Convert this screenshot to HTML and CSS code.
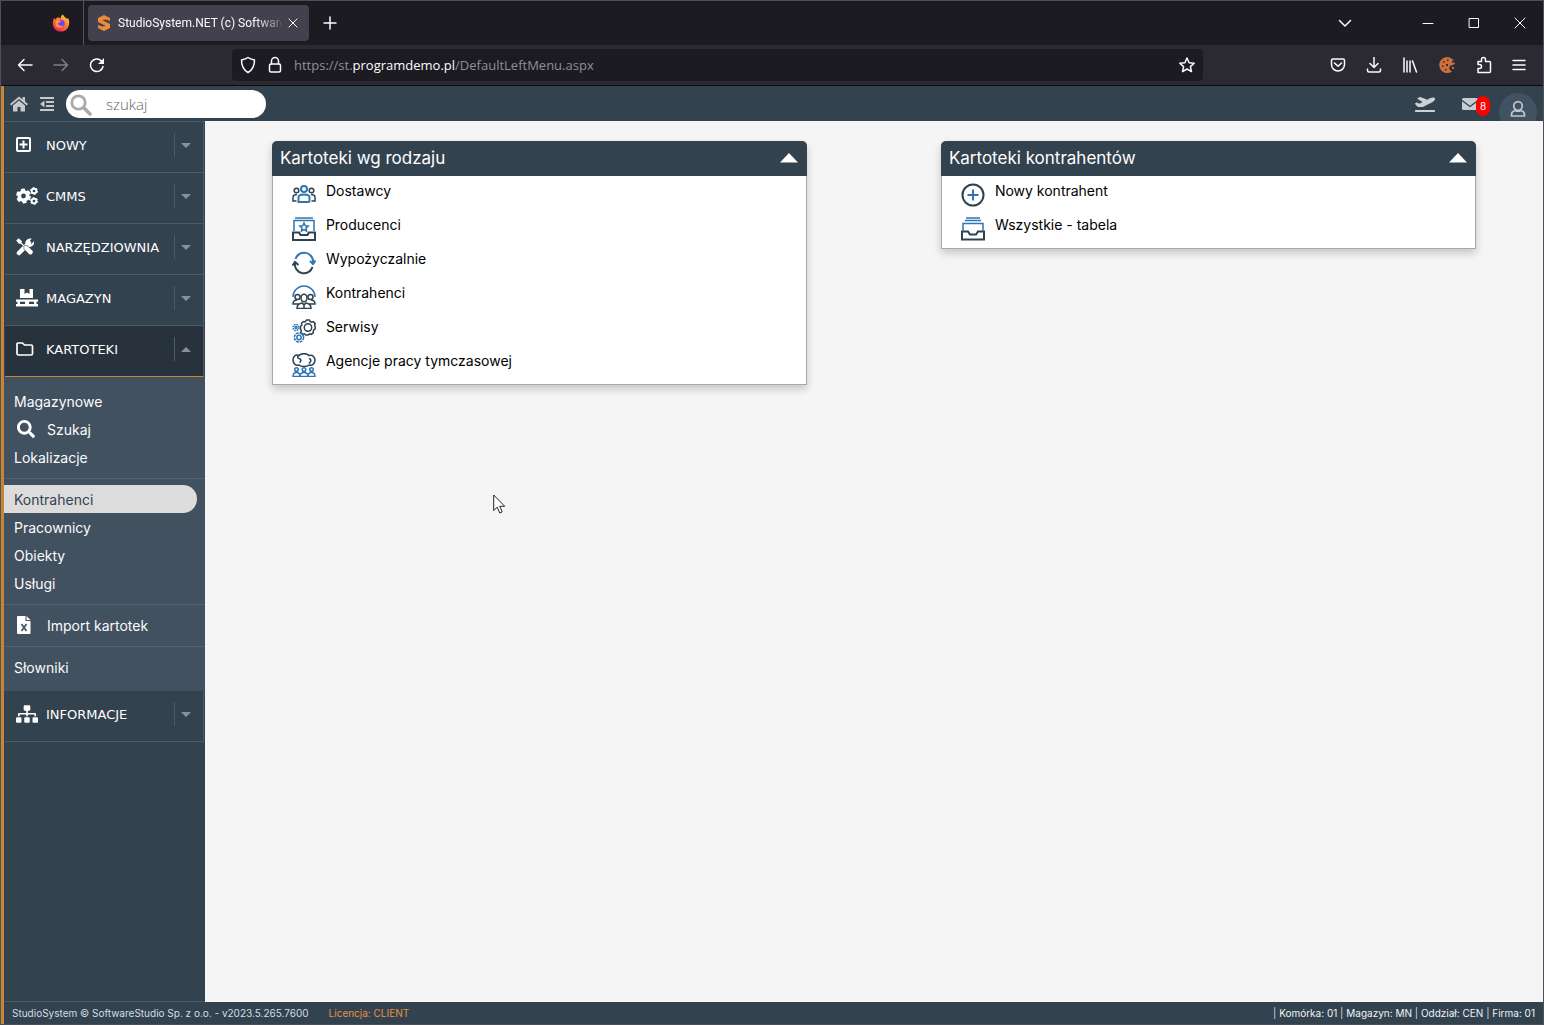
FILE: index.html
```html
<!DOCTYPE html>
<html lang="pl">
<head>
<meta charset="utf-8">
<title>StudioSystem.NET (c) SoftwareStudio</title>
<link rel="stylesheet" href="styles.css">
</head>
<body>
<div class="tabstrip">
  <div class="pinned">
    <svg width="18" height="18" viewBox="0 0 18 18"><defs><linearGradient id="fox" x1="1" y1="0" x2="0.3" y2="1"><stop offset="0" stop-color="#ffe14a"/><stop offset="0.45" stop-color="#ff8a2a"/><stop offset="1" stop-color="#f0245e"/></linearGradient></defs><path d="M2 4l1.500 1.500L5 3.500c2 0 3 .5 4 1C8.500 3 9 1.500 11 .5c1 2.500 3 3 4 4.500l1-1c1.500 3 1.500 5 .8 7.500A8.200 8.200 0 0 1 1 11.500C.5 9 1 6 2 4z" fill="url(#fox)"/><circle cx="9" cy="9.500" r="3.800" fill="#7b3ff2"/><path d="M3.500 7c2-1.500 4-1 5.500.5-1 1-2.500.8-3 2 0 2 3 3 5.500 2-1.500 3-6.500 3-8 0z" fill="#ff9a2a"/></svg>
  </div>
  <div class="tab">
    <svg width="14" height="16" viewBox="0 0 14 16"><path d="M7 0l6 3v3L9 4.500 5 5l8 4v4l-6 3-6-3v-3l4 1.500 4-.5-8-4V3z" fill="#ee8a3c"/></svg>
    <span class="tab-title">StudioSystem.NET (c) SoftwareS</span>
    <button class="bare" aria-label="Zamknij kartę"><svg width="10" height="10" viewBox="0 0 10 10"><path d="M1 1l8 8M9 1L1 9" class="line"/></svg></button>
  </div>
  <button class="bare new-tab" aria-label="Nowa karta"><svg width="14" height="14" viewBox="0 0 14 14"><path d="M7 1v12M1 7h12" class="line bold"/></svg></button>
  <div class="window-controls">
    <button class="bare list-tabs" aria-label="Lista kart"><svg width="14" height="14" viewBox="0 0 14 14"><path d="M1.500 4.500L7 10l5.500-5.500" class="line bold"/></svg></button>
    <button class="bare" aria-label="Minimalizuj"><svg width="12" height="12" viewBox="0 0 12 12"><path d="M1 6.500h10" class="line"/></svg></button>
    <button class="bare" aria-label="Maksymalizuj"><svg width="12" height="12" viewBox="0 0 12 12"><path d="M1.500 1.500h9v9h-9z" class="line"/></svg></button>
    <button class="bare" aria-label="Zamknij"><svg width="12" height="12" viewBox="0 0 12 12"><path d="M1 1l10 10M11 1L1 11" class="line"/></svg></button>
  </div>
</div>

<div class="toolbar">
  <div class="nav-buttons">
    <button class="bare" aria-label="Wstecz"><svg width="16" height="16" viewBox="0 0 16 16"><path d="M7 2.500L1.500 8 7 13.500M1.500 8h13.500" class="line bold"/></svg></button>
    <button class="bare dim" aria-label="Dalej"><svg width="16" height="16" viewBox="0 0 16 16"><path d="M9 2.500L14.500 8 9 13.500M14.500 8H1" class="line bold"/></svg></button>
    <button class="bare" aria-label="Odśwież"><svg width="16" height="16" viewBox="0 0 16 16"><path d="M14 9.500A6.300 6.300 0 1 1 12.500 4" class="line bold"/><path d="M15 1v6H9z" fill="#fbfbfe"/></svg></button>
  </div>
  <div class="url-bar">
    <svg width="16" height="18" viewBox="0 0 16 18"><path d="M8 1.500C6 3 4 3.500 1.500 4c0 6 2 10 6.500 12.500C12.500 14 14.500 10 14.500 4 12 3.500 10 3 8 1.500z" class="line bold"/></svg>
    <svg width="14" height="18" viewBox="0 0 14 18"><rect x="1.500" y="8" width="11" height="8" rx="1.500" class="line bold"/><path d="M3.500 8V5a3.500 3.500 0 0 1 7 0v3" class="line bold"/></svg>
    <span class="url">https://st.<b>programdemo.pl</b>/DefaultLeftMenu.aspx</span>
    <button class="bare" aria-label="Dodaj zakładkę"><svg width="16" height="16" viewBox="0 0 16 16"><path d="M8 1l2.100 4.700 5.100.5-3.800 3.400 1.100 5L8 12l-4.500 2.600 1.100-5L.8 6.200l5.100-.5z" class="line bold"/></svg></button>
  </div>
  <div class="tool-buttons">
    <button class="bare" aria-label="Pocket"><svg width="16" height="16" viewBox="0 0 16 16"><path d="M3 2h10a1.500 1.500 0 0 1 1.500 1.500V7.500a6.500 6.500 0 0 1-13 0V3.500A1.500 1.500 0 0 1 3 2zM4.500 6L8 9.300 11.500 6" class="line bold"/></svg></button>
    <button class="bare" aria-label="Pobrane"><svg width="16" height="16" viewBox="0 0 16 16"><path d="M8 .5V10.500M4 6.500l4 4 4-4M1.500 12v1.500A1.500 1.500 0 0 0 3 15h10a1.500 1.500 0 0 0 1.500-1.500V12" class="line bold"/></svg></button>
    <button class="bare" aria-label="Biblioteka"><svg width="16" height="16" viewBox="0 0 16 16"><path d="M2 1v14M5 4v11M8 4v11M10.500 4l4 11" class="line bold"/></svg></button>
    <button class="bare" aria-label="Cookie"><svg width="18" height="18" viewBox="0 0 18 18"><path d="M12 1.500A8 8 0 1 0 14 15.500l-2-1.500-1-2 1-2 5-2-1-2-2 1V5l2-1-2-1z" fill="#c9713d"/><path d="M5 5h1.500v1.500H5zM9 3.500h1.500V5H9zM4 9.500h1.500V11H4zM8 8h2v2H8zM7 13h1.500v1.500H7z" fill="#4a2415"/><path d="M14 11h2v2h-2z" fill="#c9713d"/></svg></button>
    <button class="bare" aria-label="Rozszerzenia"><svg width="16" height="18" viewBox="0 0 16 18"><path d="M2 5.500h3.500V3.500a2 2 0 0 1 4 0v2h4a1 1 0 0 1 1 1V15.500a1 1 0 0 1-1 1H2v-4h1.500a2 2 0 0 0 0-4H2z" class="line bold"/></svg></button>
    <button class="bare" aria-label="Menu"><svg width="14" height="14" viewBox="0 0 14 14"><path d="M1 2.500h12M1 7h12M1 11.500h12" class="line bold"/></svg></button>
  </div>
</div>

<div class="app">
  <header class="app-bar">
    <a href="#" aria-label="Start"><svg width="18" height="16" viewBox="0 0 18 16"><path d="M9 0.500L0 8l1.200 1.400L9 3l7.800 6.400L18 8l-3-2.500V1h-2.500v2.400zM9 4.500l-6 5V15.500h4.500v-4.500h3v4.500H15V9.500z" fill="#c8c8c8"/></svg></a>
    <button class="bare" aria-label="Zwiń menu"><svg width="14" height="14" viewBox="0 0 14 14"><path d="M0 1h14M6 5h8M6 9h8M0 13h14" stroke="#c8c8c8" stroke-width="2"/><path d="M4.500 3.500v7L0 7z" fill="#c8c8c8"/></svg></button>
    <label class="search">
      <svg width="22" height="22" viewBox="0 0 22 22"><circle cx="8.500" cy="8.500" r="6.700" fill="none" stroke="#aaa" stroke-width="2.800"/><path d="M13.500 13.500l6.500 6.500" stroke="#aaa" stroke-width="3.600" stroke-linecap="round"/></svg>
      <input type="text" placeholder="szukaj" aria-label="szukaj">
    </label>
    <a href="#" class="flights" aria-label="Odloty"><svg width="20" height="16" viewBox="0 0 640 512"><path fill="#cdd0d4" d="M624 448H16c-8.840 0-16 7.160-16 16v32c0 8.840 7.160 16 16 16h608c8.840 0 16-7.160 16-16v-32c0-8.840-7.160-16-16-16zM80.550 341.270c6.280 6.840 15.100 10.720 24.330 10.710l130.540-.18a65.620 65.620 0 0 0 29.640-7.120l290.960-147.650c26.740-13.570 50.710-32.940 67.020-58.310 18.310-28.480 20.300-49.090 13.070-63.650-7.210-14.570-24.740-25.270-58.250-27.450-29.850-1.940-59.540 5.920-86.280 19.480l-98.510 49.990-218.700-82.060a17.799 17.799 0 0 0-18-1.110L90.620 67.290c-10.670 5.410-13.250 19.650-5.170 28.530l156.220 98.100-103.210 52.380-72.350-36.470a17.804 17.804 0 0 0-16.070.02L9.910 230.220c-10.440 5.300-13.190 19.120-5.570 28.080l76.210 82.970z"/></svg></a>
    <a href="#" class="mail" aria-label="Wiadomości"><svg width="16" height="12" viewBox="0 0 16 12"><rect width="16" height="12" rx="1.500" fill="#c9cdd2"/><path d="M0 2.500l8 6 8-6" fill="none" stroke="#33424f" stroke-width="1.300"/></svg><span class="badge">8</span></a>
    <a href="#" class="user" aria-label="Użytkownik"><svg width="16" height="18" viewBox="0 0 16 18"><circle cx="8" cy="6" r="4.300" class="user-line"/><path d="M5 10.500c-2 .5-3.500 2-3.500 4V16h13v-1.500c0-2-1.500-3.500-3.500-4-2 1-4 1-6 0z" class="user-line"/></svg></a>
  </header>

  <nav class="sidebar">
    <a href="#" class="group"><span class="gicon"><svg width="16" height="16" viewBox="0 0 16 16"><rect x="1" y="1" width="13" height="13" rx="1" fill="none" stroke="#fff" stroke-width="2"/><path d="M7.500 3.500v8M3.500 7.500h8" stroke="#fff" stroke-width="2"/></svg></span><span>NOWY</span><i class="arrow"></i></a>
    <a href="#" class="group"><span class="gicon"><svg width="22" height="18" viewBox="0 0 22 18"><g fill="none" stroke="#fff"><circle cx="7.500" cy="9" r="4.200" stroke-width="3.600"/><circle cx="7.500" cy="9" r="6.200" stroke-width="2.400" stroke-dasharray="3.900 2.590"/><circle cx="18" cy="4" r="2.300" stroke-width="1.900"/><circle cx="18" cy="4" r="3.500" stroke-width="1" stroke-dasharray="2 1.660"/><circle cx="18" cy="14" r="2.300" stroke-width="1.900"/><circle cx="18" cy="14" r="3.500" stroke-width="1" stroke-dasharray="2 1.660"/></g></svg></span><span>CMMS</span><i class="arrow"></i></a>
    <a href="#" class="group"><span class="gicon"><svg width="18" height="18" viewBox="0 0 18 18"><path d="M3 15L13 5" stroke="#fff" stroke-width="4.500" stroke-linecap="round"/><path d="M15.800.8l-3 3 .4 2 2 .4 2.700-2.900c.8 3.500-1.700 6.200-5 5.500L9.500 6c-.8-3 2.500-6.500 6.300-5.200z" fill="#fff"/><path d="M0 2.500L2.500 0 6 2.800v2L9 8l1-.5c1 0 1.500.2 2 .7l4.800 4.800c1.500 1.500-1.800 5-3.500 3.500L8.500 11.800c-.8-.8-.9-1.500-.5-2.500L4.800 6h-2z" fill="#fff" stroke="#33424f" stroke-width=".6"/></svg></span><span>NARZĘDZIOWNIA</span><i class="arrow"></i></a>
    <a href="#" class="group"><span class="gicon"><svg width="22" height="18" viewBox="0 0 22 18"><path d="M4 0h4.500v5L11 3.500 13.500 5V0H17v9H4zM0 10.500h22v2.200h-1.500V15H22v2.500H0V15h1.500v-2.300H0zM4 12.700V15h5v-2.300zm9 0V15h5v-2.300z" fill="#fff" fill-rule="evenodd"/></svg></span><span>MAGAZYN</span><i class="arrow"></i></a>
    <a href="#" class="group open"><span class="gicon"><svg width="18" height="14" viewBox="0 0 18 14"><path d="M2 1h4.500l2 2H15a1.500 1.500 0 0 1 1.500 1.500V11.500A1.500 1.500 0 0 1 15 13H2.500A1.500 1.500 0 0 1 1 11.500V2a1 1 0 0 1 1-1z" fill="none" stroke="#fff" stroke-width="1.700"/></svg></span><span>KARTOTEKI</span><i class="arrow up"></i></a>
    <div class="submenu">
      <div class="section">
        <a href="#">Magazynowe</a>
        <a href="#"><span class="sicon"><svg width="18" height="18" viewBox="0 0 512 512"><path fill="#fff" d="M505 442.700L405.300 343c-4.500-4.500-10.600-7-17-7H372c27.600-35.300 44-79.700 44-128C416 93.100 322.900 0 208 0S0 93.100 0 208s93.100 208 208 208c48.300 0 92.700-16.400 128-44v16.300c0 6.400 2.500 12.500 7 17l99.700 99.700c9.400 9.400 24.600 9.400 33.900 0l28.300-28.300c9.400-9.400 9.400-24.600.1-34zM208 336c-70.700 0-128-57.200-128-128 0-70.700 57.200-128 128-128 70.700 0 128 57.200 128 128 0 70.700-57.200 128-128 128z"/></svg></span>Szukaj</a>
        <a href="#">Lokalizacje</a>
      </div>
      <div class="section">
        <a href="#" class="current">Kontrahenci</a>
        <a href="#">Pracownicy</a>
        <a href="#">Obiekty</a>
        <a href="#">Usługi</a>
      </div>
      <div class="section">
        <a href="#"><span class="sicon"><svg width="14" height="18" viewBox="0 0 14 18"><path d="M1 0h7.500v5H13.500v12a1 1 0 0 1-1 1H1a1 1 0 0 1-1-1V1a1 1 0 0 1 1-1zM9.500 0l4 4h-4z" fill="#fff"/><path d="M4.500 8l5 7M9.500 8l-5 7" stroke="#415160" stroke-width="1.700"/></svg></span>Import kartotek</a>
      </div>
      <div class="section">
        <a href="#">Słowniki</a>
      </div>
    </div>
    <a href="#" class="group"><span class="gicon"><svg width="22" height="18" viewBox="0 0 640 512"><path fill="#fff" d="M128 352H32c-17.670 0-32 14.330-32 32v96c0 17.670 14.330 32 32 32h96c17.670 0 32-14.330 32-32v-96c0-17.670-14.330-32-32-32zm-24-80h192v48h48v-48h192v48h48v-57.590c0-21.170-17.230-38.410-38.410-38.410H344v-64h40c17.670 0 32-14.330 32-32V32c0-17.670-14.330-32-32-32H256c-17.670 0-32 14.330-32 32v96c0 17.670 14.330 32 32 32h40v64H94.410C73.230 224 56 241.230 56 262.410V320h48v-48zm264 80h-96c-17.670 0-32 14.330-32 32v96c0 17.670 14.330 32 32 32h96c17.670 0 32-14.330 32-32v-96c0-17.670-14.330-32-32-32zm240 0h-96c-17.670 0-32 14.330-32 32v96c0 17.670 14.330 32 32 32h96c17.670 0 32-14.330 32-32v-96c0-17.670-14.330-32-32-32z"/></svg></span><span>INFORMACJE</span><i class="arrow"></i></a>
  </nav>

  <main class="content">
    <section class="panel">
      <h2>Kartoteki wg rodzaju <button class="bare" aria-label="Zwiń"><svg width="18" height="10" viewBox="0 0 18 10"><path d="M9 0l9 9.500H0z" fill="#fff"/></svg></button></h2>
      <ul>
        <li><a href="#"><svg class="duo" width="24" height="24" viewBox="0 0 24 24"><g class="dark"><circle cx="4.500" cy="7.500" r="2.300"/><circle cx="19.500" cy="7.500" r="2.300"/><path d="M4.500 18H1v-3.500c0-2 1.500-3 4-3M19.500 18H23v-3.500c0-2-1.500-3-4-3"/></g><g class="blue thick"><circle cx="12" cy="6" r="3"/><path d="M6.500 19V14c0-2 2-2.500 5.500-2.500s5.500.5 5.500 2.500v4c0 .6-.4 1-1 1z"/></g></svg>Dostawcy</a></li>
        <li><a href="#"><svg class="duo" width="24" height="24" viewBox="0 0 24 24"><path class="blue" d="M3 1h18M2 14V3.500h20V14M12 6l1.200 2.800 3 .3-2.200 2 .6 3L12 12.500 9.400 14l.6-3-2.200-2 3-.3z"/><path class="dark thick" d="M1 15.500h6l1.500 2.500h7l1.500-2.500h6V23H1z"/></svg>Producenci</a></li>
        <li><a href="#"><svg class="duo" width="24" height="24" viewBox="0 0 24 24"><path class="blue thick" d="M3.500 8A9 9 0 0 1 21 12M18 10l3 3 2.500-3.500"/><path class="dark thick" d="M20.500 16A9 9 0 0 1 3 12M.5 14.500L3 11l3.500 3"/></svg>Wypożyczalnie</a></li>
        <li><a href="#"><svg class="duo" width="24" height="24" viewBox="0 0 24 24"><path class="blue" d="M1 12a11 11 0 0 1 22 0"/><g class="dark"><circle cx="5.500" cy="12" r="2.500"/><circle cx="18.500" cy="12" r="2.500"/><ellipse cx="12" cy="13" rx="3" ry="3.800"/><path d="M7 19H1c0-3 1.500-4 4-4M17 19h6c0-3-1.500-4-4-4M5 23.500c0-3.500 2-5 5-5.500l2 2 2-2c3 .5 5 2 5 5.500zM12 19v4M10.500 19h3"/></g></svg>Kontrahenci</a></li>
        <li><a href="#"><svg class="duo" width="24" height="24" viewBox="0 0 24 24"><g class="dark"><path d="M14.500 1h3l.6 1.600 1.600.7 1.600-.7 2 2-.7 1.700.6 1.500v2l-1.300 1-.7 1.500.1 1.500-2 1.500-1.600-.5-1.600 1.200h-2.400l-1.400-1.200-1.700.4-1.800-1.800.5-1.600L8.500 10V7.500L9.800 6 9.500 4.300l2-1.800 1.600.4z"/><circle cx="16" cy="8.500" r="3.700"/></g><g class="blue"><circle cx="4" cy="8.500" r="3" stroke-dasharray="1.600 .750"/><circle cx="4" cy="8.500" r="1"/><circle cx="7" cy="18.500" r="4.600" stroke-dasharray="2.800 .810"/><circle cx="7" cy="18.500" r="2.200"/></g></svg>Serwisy</a></li>
        <li><a href="#"><svg class="duo" width="24" height="24" viewBox="0 0 24 24"><path class="dark" d="M7 2.500C9 0 15 0 17 2.500c3-1 6 1 6 4.500 0 4-3 6-6 5-2 2-8 2-10 0-3 1-6-1-6-5s3-6 6-4.500zM6.500 5.500c3 0 3 3 1 4M17 5.500c3 1 2 3 0 5M7 2.500c-2 1-1.500 2-.5 3"/><g class="blue"><circle cx="4.500" cy="16.500" r="1.800"/><circle cx="12" cy="16.500" r="1.800"/><circle cx="19.500" cy="16.500" r="1.800"/><path d="M1 23.500c0-3 1-4 3.500-4s3.500 1 3.500 4c0-3 1.500-4 4-4s4 1 4 4c0-3 1-4 3.500-4s3.500 1 3.500 4zM1 23.500h22"/></g></svg>Agencje pracy tymczasowej</a></li>
      </ul>
    </section>
    <section class="panel">
      <h2>Kartoteki kontrahentów <button class="bare" aria-label="Zwiń"><svg width="18" height="10" viewBox="0 0 18 10"><path d="M9 0l9 9.500H0z" fill="#fff"/></svg></button></h2>
      <ul>
        <li><a href="#"><svg class="duo" width="24" height="24" viewBox="0 0 24 24"><circle class="dark thick" cx="12" cy="12" r="10.500"/><path class="blue thick" d="M12 6.500v11M6.500 12h11"/></svg>Nowy kontrahent</a></li>
        <li><a href="#"><svg class="duo" width="24" height="24" viewBox="0 0 24 24"><path class="blue" d="M5 1h14M4 3.500h16M2 13.500V6.500h20v7"/><path class="dark thick" d="M1 14.500h6l2 3h6l2-3h6V22.500H1z"/></svg>Wszystkie - tabela</a></li>
      </ul>
    </section>
  </main>

  <footer class="status">
    <span>StudioSystem © SoftwareStudio Sp. z o.o. - v2023.5.265.7600</span>
    <span class="licence">Licencja: CLIENT</span>
    <span class="context">| <b>Komórka: 01</b> | <b>Magazyn: MN</b> | <b>Oddział: CEN</b> | <b>Firma: 01</b></span>
  </footer>
</div>
<svg class="cursor" width="13" height="20" viewBox="0 0 13 20"><path d="M.7 1v15.500l3.500-3.300 2.600 5.800 2.400-1.100-2.500-5.600h5z" fill="#fff" stroke="#222" stroke-width="1"/></svg>
</body>
</html>
```
FILE: styles.css
```css
* { box-sizing: border-box; }
body {
  margin: 0;
  min-height: 100vh;
  display: flex;
  flex-direction: column;
  border: 1px solid #4c5058;
  background: #1c1b22;
  color: #fbfbfe;
  font-family: Inter, "Open Sans", sans-serif;
  font-size: 14px;
}
a { color: inherit; text-decoration: none; }
svg { display: block; flex: none; }
.bare { background: none; border: 0; padding: 0; color: inherit; display: block; }
.line { fill: none; stroke: #fbfbfe; stroke-width: 1; stroke-linecap: round; stroke-linejoin: round; }
.bold { stroke-width: 1.5; }

/* Browser tabs */
.tabstrip { height: 44px; display: flex; align-items: center; font-family: Roboto, "Open Sans", sans-serif; }
.pinned { width: 83px; align-self: stretch; display: flex; align-items: center; padding-left: 51px; border-right: 1px solid #55545c; }
.tab { width: 221px; height: 36px; margin-left: 4px; padding: 0 11px 0 9px; display: flex; align-items: center; gap: 7px; border-radius: 4px; background: #42414d; font-size: 12px; }
.tab-title { flex: 1; min-width: 0; white-space: nowrap; -webkit-mask-image: linear-gradient(90deg, #000 84%, rgba(0, 0, 0, .2)); mask-image: linear-gradient(90deg, #000 84%, rgba(0, 0, 0, .2)); }
.new-tab { margin-left: 14px; }
.window-controls { margin-left: auto; margin-right: 17px; display: flex; align-items: center; gap: 34px; }
.list-tabs { margin-right: 36px; }

/* Address bar */
.toolbar { height: 41px; display: flex; align-items: center; background: #2b2a33; border-bottom: 1px solid #0c0c0d; }
.nav-buttons { display: flex; gap: 20px; width: 231px; padding-left: 16px; }
.dim { opacity: .4; }
.url-bar { width: 63%; height: 32px; padding: 0 8px; display: flex; align-items: center; gap: 12px; border-radius: 4px; background: #1c1b22; }
.url { flex: 1; color: #8f8f98; font-family: "Open Sans", sans-serif; font-size: 13px; }
.url b { color: #fbfbfe; font-weight: 400; }
.tool-buttons { margin-left: auto; margin-right: 17px; display: flex; align-items: center; gap: 20px; }

/* Application frame */
.app {
  flex: 1;
  display: grid;
  grid-template: 35px 1fr 22px / 201px 1fr;
  border-left: 3px solid #c68633;
  background: #33424f;
}
.app-bar { grid-column: 1 / -1; display: flex; align-items: center; padding: 1px 6px 0; gap: 12px; overflow: hidden; }
.search { position: relative; width: 200px; height: 28px; }
.search svg { position: absolute; left: 4px; top: 4px; }
.search input { width: 100%; height: 28px; padding: 0 12px 0 40px; border: 0; border-radius: 14px; background: #fff; font: 300 15px "Open Sans", sans-serif; }
.search input::placeholder { color: #666; }
.flights { margin-left: auto; }
.mail { display: flex; align-items: center; margin-left: 15px; margin-right: -3px; }
.badge { width: 14px; height: 20px; margin: 4px 0 0 -2px; border-radius: 7px; background: #f00; color: #fff; font-size: 10px; line-height: 20px; text-align: center; }
.user { width: 38px; height: 38px; align-self: flex-start; flex: none; margin-top: 6px; border-radius: 50%; background: #415262; display: flex; justify-content: center; padding-top: 7px; }
.user-line { fill: none; stroke: #c0c6cc; stroke-width: 1.7; }

.sidebar { border-top: 1px solid #48596a; border-bottom: 1px solid #48596a; }
.group { height: 51px; margin: 0 1px; padding: 0 12px 4px 11px; display: flex; align-items: center; border-bottom: 1px solid #4b5b68; border-right: 1px solid #4b5b68; color: #fff; font-family: "DejaVu Sans", sans-serif; font-size: 13px; }
.group.open { background: #28323c; border-bottom-color: #c68633; }
.gicon { width: 30px; flex: none; }
.arrow { margin-left: auto; width: 17px; height: 24px; border-left: 1px solid #4b5b68; display: flex; align-items: center; justify-content: flex-end; }
.arrow::before { content: ""; border: 5px solid transparent; border-top-color: #87919a; border-bottom: 0; }
.arrow.up::before { border-top: 0; border-bottom: 5px solid #87919a; }

.submenu { background: #415160; padding: 4px 0 3px; }
.section { padding: 6px 0 7px; border-bottom: 1px solid #536473; }
.section:last-child { border-bottom: 0; }
.section a { height: 28px; padding-left: 10px; margin-right: 8px; display: flex; align-items: center; }
.section .current { background: #dcdcdc; color: #33424f; border-radius: 0 14px 14px 0; }
.sicon { width: 30px; margin-left: 3px; flex: none; }

/* Content panels */
.content { display: grid; grid-template-columns: 1fr 1fr; align-items: start; background: #f5f5f5; padding-top: 20px; }
.panel { margin: 0 10%; border: 1px solid #a3a9b4; border-top: 0; border-radius: 5px 5px 0 0; background: #fff; color: #000; box-shadow: 0 4px 8px rgba(0, 0, 0, .2); }
.panel h2 { height: 35px; margin: 0 -1px; padding: 0 9px 2px 8px; display: flex; align-items: center; justify-content: space-between; border-radius: 5px 5px 0 0; background: #33424f; color: #fff; font-size: 17px; font-weight: 400; }
.panel ul { list-style: none; margin: 0; padding: 0 0 4px; }
.panel li a { height: 34px; padding: 7px 0 0 19px; display: flex; gap: 10px; line-height: 16px; }
.duo * { fill: none; stroke-width: 1.5; }
.duo .dark, .duo .dark * { stroke: #2f4250; }
.duo .blue, .duo .blue * { stroke: #2e75b5; }
.duo .thick, .duo .thick * { stroke-width: 2; }

.status { grid-column: 1 / -1; display: flex; align-items: center; padding: 0 8px; gap: 20px; color: #d5dde3; font-size: 10px; }
.status b { font-weight: 400; color: #f0f3f5; }
.licence { color: #e8913f; }
.context { margin-left: auto; }
.cursor { position: absolute; left: 493px; top: 494px; }
```
